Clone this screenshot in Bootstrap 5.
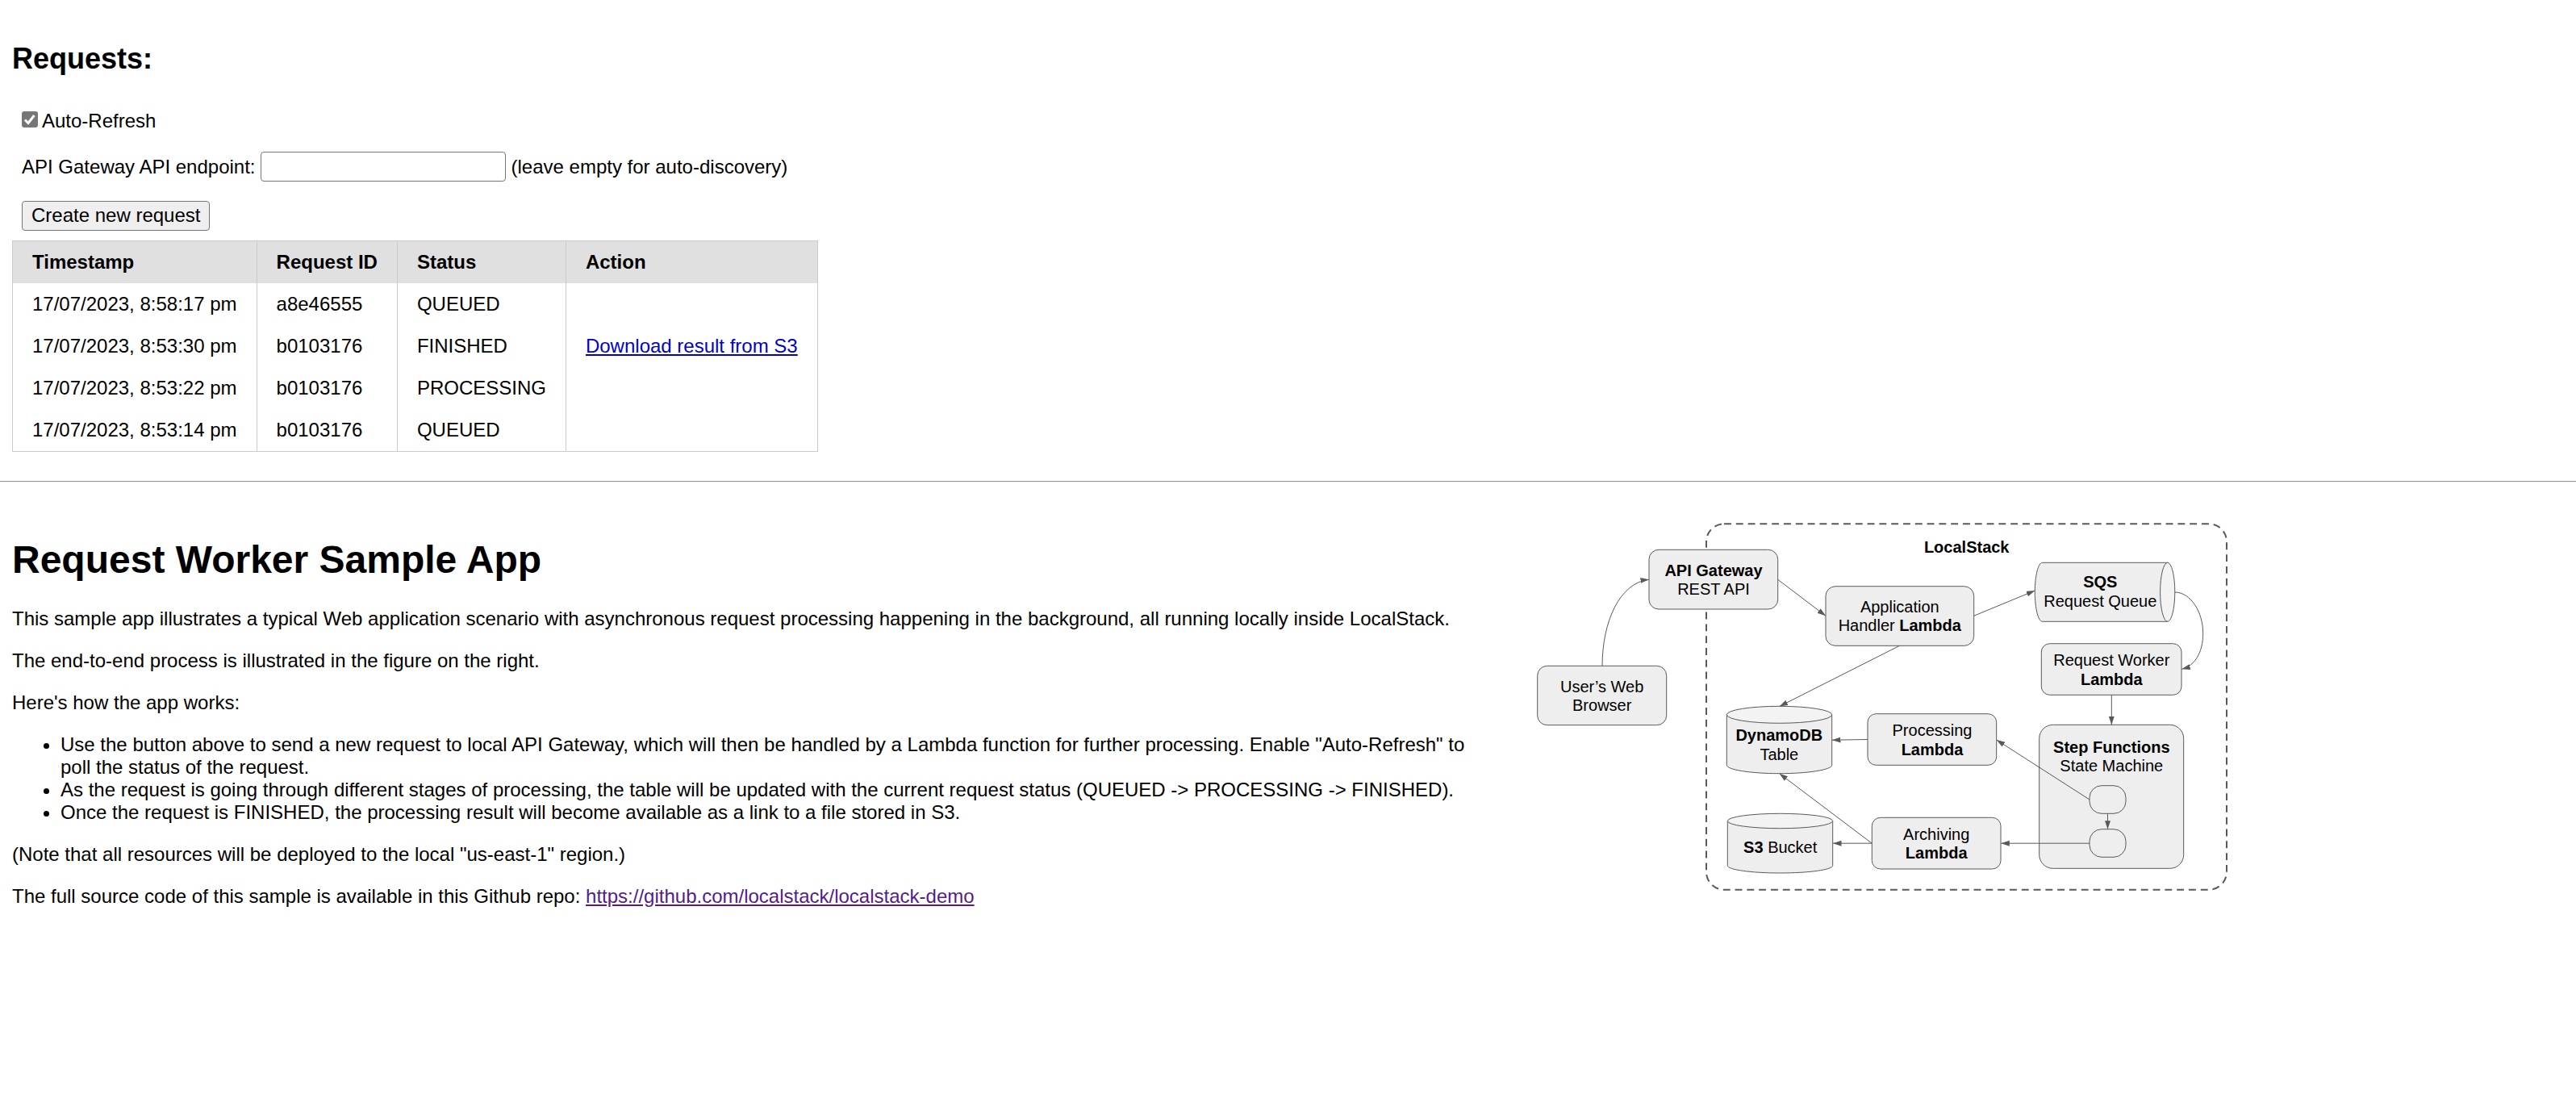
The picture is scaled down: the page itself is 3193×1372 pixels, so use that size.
<!DOCTYPE html>
<html lang="en">
<head>
<meta charset="utf-8">
<meta name="viewport" content="width=device-width, initial-scale=1">
<title>Request Worker Sample App</title>
<link href="https://cdn.jsdelivr.net/npm/bootstrap@5.3.0/dist/css/bootstrap.min.css" rel="stylesheet">
<style>
  body { font-family: "Liberation Sans", Arial, sans-serif; font-size: 24px; line-height: 28px; color: #000; background: #fff; }
  h1 { font-size: 48px; line-height: 56px; font-weight: 700; margin: 0 0 31px; }
  h2 { font-size: 36px; line-height: 42px; font-weight: 700; margin: 0; }
  p, ul { margin: 0 0 24px; }
  ul { padding-left: 60px; }
  .page-block { padding: 0 15px; }
  .requests { padding-top: 52px; }
  .controls { padding: 42px 12px 12px; gap: 24px; }
  .tick { appearance: none; width: 20px; height: 20px; border-radius: 3px; margin: 0 5px 4px 0; background: #767676 url("data:image/svg+xml,%3Csvg xmlns='http://www.w3.org/2000/svg' viewBox='0 0 20 20'%3E%3Cpath d='M4 10.5 8 14.5 15.5 5' fill='none' stroke='%23fff' stroke-width='3'/%3E%3C/svg%3E"); }
  .endpoint { width: 304px; height: 37px; border: 1px solid #767676; border-radius: 4px; padding: 2px 4px; margin: 0 7px 0 6px; }
  .create { height: 37px; border: 1px solid #767676; border-radius: 4px; background: #efefef; color: #000; padding: 0 11px 2px; line-height: 28px; }
  .req-table { width: auto; margin: 0; border: 1px solid #cbcbcb; border-collapse: collapse; white-space: nowrap; }
  .req-table th, .req-table td { padding: 12px 24px; border-left: 1px solid #cbcbcb; text-align: left; }
  .req-table thead { background: #e0e0e0; }
  .divider { border: 0; border-top: 1px solid #9a9a9a; border-bottom: 1px solid #eee; opacity: 1; margin: 36px 0 0; }
  .result-link { color: #0000d4; }
  .repo-link { color: #551a8b; }
  .about { padding-top: 68px; }
  .figure-col { padding: 32px 14px 0; }
  .flow { display: block; width: 100%; max-width: 900px; height: auto; }
  .flow text { font-size: 20px; text-anchor: middle; fill: #000; }
  .flow .strong { font-weight: 700; }
  .flow .shape { fill: #eee; stroke: #595959; stroke-width: 1; }
  .flow .face { fill: #f3f3f3; stroke: #595959; stroke-width: 1; }
  .flow .wire { fill: none; stroke: #595959; stroke-width: 1; marker-end: url(#tip); }
</style>
<script src="https://cdn.jsdelivr.net/npm/bootstrap@5.3.0/dist/js/bootstrap.bundle.min.js"></script>
</head>
<body>
<section class="page-block requests">
  <h2>Requests:</h2>
  <div class="controls d-flex flex-column align-items-start">
    <div class="d-flex align-items-center">
      <input class="tick" type="checkbox" id="autoRefresh" checked>
      <label for="autoRefresh">Auto-Refresh</label>
    </div>
    <div class="d-flex flex-wrap align-items-center">
      <label for="endpoint">API Gateway API endpoint:</label>
      <input class="endpoint" type="text" id="endpoint">
      <span>(leave empty for auto-discovery)</span>
    </div>
    <button class="create" type="button">Create new request</button>
  </div>
  <table class="req-table">
    <thead>
      <tr><th>Timestamp</th><th>Request ID</th><th>Status</th><th>Action</th></tr>
    </thead>
    <tbody>
      <tr><td>17/07/2023, 8:58:17 pm</td><td>a8e46555</td><td>QUEUED</td><td></td></tr>
      <tr><td>17/07/2023, 8:53:30 pm</td><td>b0103176</td><td>FINISHED</td><td><a class="result-link" href="#">Download result from S3</a></td></tr>
      <tr><td>17/07/2023, 8:53:22 pm</td><td>b0103176</td><td>PROCESSING</td><td></td></tr>
      <tr><td>17/07/2023, 8:53:14 pm</td><td>b0103176</td><td>QUEUED</td><td></td></tr>
    </tbody>
  </table>
</section>
<hr class="divider">
<section class="row g-0">
  <div class="col-7 page-block about">
    <h1>Request Worker Sample App</h1>
    <p>This sample app illustrates a typical Web application scenario with asynchronous request processing happening in the background, all running locally inside LocalStack.</p>
    <p>The end-to-end process is illustrated in the figure on the right.</p>
    <p>Here's how the app works:</p>
    <ul>
      <li>Use the button above to send a new request to local API Gateway, which will then be handled by a Lambda function for further processing. Enable "Auto-Refresh" to poll the status of the request.</li>
      <li>As the request is going through different stages of processing, the table will be updated with the current request status (QUEUED -&gt; PROCESSING -&gt; FINISHED).</li>
      <li>Once the request is FINISHED, the processing result will become available as a link to a file stored in S3.</li>
    </ul>
    <p>(Note that all resources will be deployed to the local "us-east-1" region.)</p>
    <p>The full source code of this sample is available in this Github repo: <a class="repo-link" href="https://github.com/localstack/localstack-demo">https://github.com/localstack/localstack-demo</a></p>
  </div>
  <div class="col-5 figure-col">
    <svg class="flow" viewBox="0 0 900 480" role="img" aria-label="Architecture of the sample app">
      <defs>
        <marker id="tip" markerUnits="userSpaceOnUse" markerWidth="12" markerHeight="8" refX="10.5" refY="3.5" orient="auto">
          <path d="M0 0 10.5 3.5 0 7Z" fill="#595959"/>
        </marker>
      </defs>
      <rect x="238" y="19.3" width="645" height="453.4" rx="22" fill="none" stroke="#595959" stroke-width="2" stroke-dasharray="8.9 5.9"/>
      <text class="strong" x="560.7" y="55">LocalStack</text>

      <!-- nodes -->
      <rect class="shape" x="28.7" y="195.3" width="160" height="73.4" rx="12"/>
      <text x="108.7" y="227.7">User’s Web</text>
      <text x="108.7" y="251">Browser</text>

      <rect class="shape" x="167" y="51.3" width="159.7" height="73.7" rx="12"/>
      <text class="strong" x="247" y="84">API Gateway</text>
      <text x="247" y="107.3">REST API</text>

      <rect class="shape" x="386" y="96.7" width="183.7" height="73.6" rx="12"/>
      <text x="477.8" y="129">Application</text>
      <text x="477.8" y="152.3">Handler <tspan class="strong">Lambda</tspan></text>

      <path class="shape" d="M809.7 67.3H654.5C649.4 67.3 645.3 83.6 645.3 103.8S649.4 140.3 654.5 140.3H809.7"/>
      <ellipse class="face" cx="809.7" cy="103.8" rx="9.1" ry="36.5"/>
      <text class="strong" x="726.3" y="98.3">SQS</text>
      <text x="726.3" y="122">Request Queue</text>

      <rect class="shape" x="653.3" y="167.7" width="173.7" height="63.6" rx="10.5"/>
      <text x="740.3" y="195.3">Request Worker</text>
      <text class="strong" x="740.3" y="218.5">Lambda</text>

      <path class="shape" d="M263.3 255.8V318.2C263.3 324 292.5 328.7 328.5 328.7S393.7 324 393.7 318.2V255.8"/>
      <ellipse class="face" cx="328.5" cy="255.8" rx="65.2" ry="10.5"/>
      <text class="strong" x="328.3" y="288.2">DynamoDB</text>
      <text x="328.3" y="311.7">Table</text>

      <path class="shape" d="M264.3 387.5V442.8C264.3 447.9 293.5 452 329.5 452S394.7 447.9 394.7 442.8V387.5"/>
      <ellipse class="face" cx="329.5" cy="387.5" rx="65.2" ry="9.2"/>
      <text x="329.7" y="426.9"><tspan class="strong">S3</tspan> Bucket</text>

      <rect class="shape" x="438" y="254.7" width="159.7" height="63.6" rx="10.5"/>
      <text x="518" y="282.3">Processing</text>
      <text class="strong" x="518" y="305.7">Lambda</text>

      <rect class="shape" x="443.3" y="383.3" width="159.7" height="63.7" rx="10.5"/>
      <text x="523.2" y="410.9">Archiving</text>
      <text class="strong" x="523.2" y="434.2">Lambda</text>

      <rect class="shape" x="650.7" y="268.3" width="179" height="178" rx="17"/>
      <text class="strong" x="740.3" y="302.8">Step Functions</text>
      <text x="740.3" y="326">State Machine</text>
      <rect class="shape" x="713" y="343.7" width="45" height="34.6" rx="15"/>
      <rect class="shape" x="713" y="397.7" width="45" height="34.6" rx="15"/>

      <!-- connections -->
      <path class="wire" d="M109 195.3C109 140 131 92 167 88.3"/>
      <path class="wire" d="M326.7 88.3 386 133.3"/>
      <path class="wire" d="M569.7 133.3 645.3 102"/>
      <path class="wire" d="M477.5 170.3 328.6 245.5"/>
      <path class="wire" d="M818.8 104C838 104 853.7 128 853.7 155C853.7 178 844 195 827.3 199.3"/>
      <path class="wire" d="M740.3 231.3V268.3"/>
      <path class="wire" d="M438 286.5 394 287.2"/>
      <path class="wire" d="M443.3 415.2H395"/>
      <path class="wire" d="M443.3 415.2 328.6 328.7"/>
      <path class="wire" d="M713 361 597.7 287"/>
      <path class="wire" d="M735.5 378.3V397.7"/>
      <path class="wire" d="M713 415.2H603.3"/>
    </svg>
  </div>
</section>
</body>
</html>
